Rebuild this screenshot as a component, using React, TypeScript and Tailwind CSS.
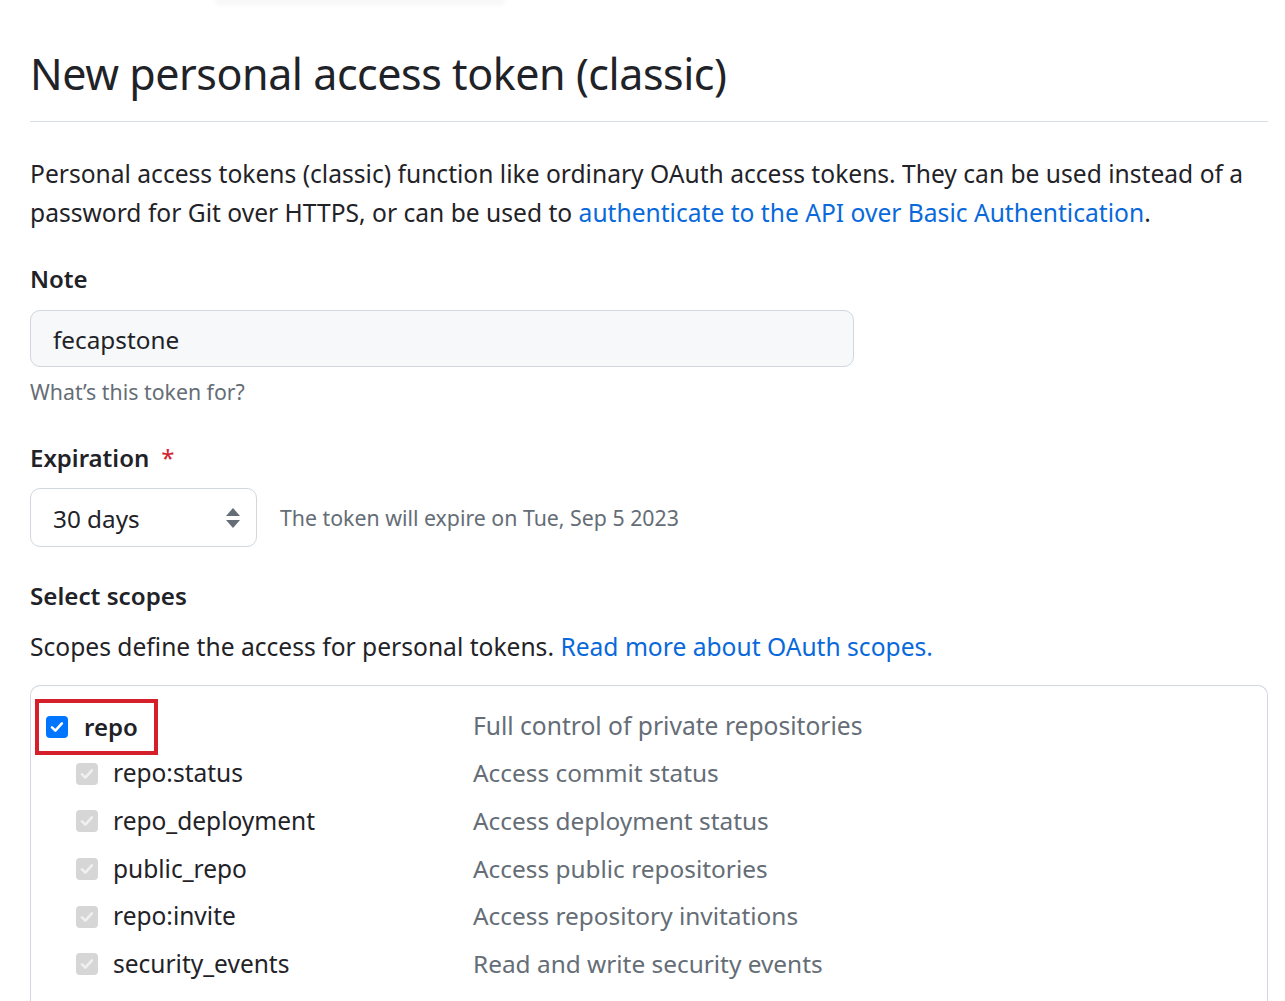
import React from "react";

const font = { fontFamily: '"Noto Sans", "Open Sans", sans-serif' };

function Check({ disabled }: { disabled?: boolean }) {
  return (
    <span
      className={
        "inline-flex h-[22px] w-[22px] shrink-0 items-center justify-center rounded-[4px] " +
        (disabled ? "bg-[#d6d6d6]" : "bg-[#0075ff]")
      }
    >
      <svg width="16" height="16" viewBox="0 0 16 16" fill="none">
        <path
          d="M3 8.4 L6.4 11.6 L12.9 4.4"
          stroke={disabled ? "#f0f0f0" : "#ffffff"}
          strokeWidth="2.6"
          strokeLinecap="round"
          strokeLinejoin="round"
        />
      </svg>
    </span>
  );
}

const subs: [string, string][] = [
  ["repo:status", "Access commit status"],
  ["repo_deployment", "Access deployment status"],
  ["public_repo", "Access public repositories"],
  ["repo:invite", "Access repository invitations"],
  ["security_events", "Read and write security events"],
];

export default function App() {
  return (
    <div className="relative min-h-[1001px] bg-white text-[#1f2328]" style={font}>
      <div className="mx-[215px] h-[4px] w-[290px] rounded-b-full bg-[#f3f3f3] blur-[2px]" />
      <div className="pl-[30px] pr-[17px] pt-[42px]">
        <div className="border-b border-[#d8dee4] pb-[20px]">
          <h1 className="text-[43px] font-normal leading-[55px] tracking-[-0.45px]">
            New personal access token (classic)
          </h1>
        </div>

        <div className="mt-[32px] text-[24.6px] leading-[39px]">
          <div>
            Personal access tokens (classic) function like ordinary OAuth access tokens. They can be used instead of a
          </div>
          <div>
            password for Git over HTTPS, or can be used to{" "}
            <a className="text-[#0969da]">authenticate to the API over Basic Authentication</a>.
          </div>
        </div>

        <div className="mt-[29px] text-[24px] font-semibold leading-[36px]">Note</div>
        <div className="mt-[13px] flex h-[57px] w-[824px] items-center rounded-[10px] border border-[#d0d7de] bg-[#f6f8fa] px-[22px] pt-[3px] text-[24.3px]">
          fecapstone
        </div>
        <div className="mt-[9px] text-[21.3px] leading-[32px] text-[#656d76]">What’s this token for?</div>

        <div className="mt-[32px] flex items-center text-[24px] font-semibold leading-[36px]">
          Expiration
          <span className="ml-[12px] font-normal text-[#d1242f]">*</span>
        </div>
        <div className="mt-[12px] flex items-center">
          <div className="flex h-[59px] w-[227px] items-center justify-between rounded-[10px] border border-[#d0d7de] bg-white pl-[22px] pr-[15px] text-[24.3px]">
            <span className="pt-[4px]">30 days</span>
            <svg width="16" height="22" viewBox="0 0 16 22" fill="#656d76">
              <path d="M8 1 L15 9 L1 9 Z" />
              <path d="M1 13 L15 13 L8 21 Z" />
            </svg>
          </div>
          <span className="ml-[23px] text-[21.3px] text-[#656d76]">The token will expire on Tue, Sep 5 2023</span>
        </div>

        <div className="mt-[31px] text-[24.2px] font-semibold leading-[36px]">Select scopes</div>
        <p className="mt-[15px] text-[24.6px] leading-[36px]">
          Scopes define the access for personal tokens.{" "}
          <a className="text-[#0969da]">Read more about OAuth scopes.</a>
        </p>

        <div className="relative mt-[20px] rounded-t-[10px] border border-b-0 border-[#d0d7de] pb-[60px] pt-[17px]">
          <div className="absolute left-[4px] top-[13px] h-[56px] w-[123px] border-[4px] border-[#d51f2a]" />
          <div className="flex h-[47px] items-center">
            <div className="flex w-[442px] items-center pl-[15px]">
              <Check />
              <span className="ml-[16px] text-[24px] font-semibold">repo</span>
            </div>
            <span className="text-[24.6px] text-[#656d76]">Full control of private repositories</span>
          </div>
          {subs.map(([name, desc]) => (
            <div key={name} className="flex h-[47.6px] items-center">
              <div className="flex w-[442px] items-center pl-[45px]">
                <Check disabled />
                <span className="ml-[15px] text-[24.5px]">{name}</span>
              </div>
              <span className="text-[24.4px] text-[#656d76]">{desc}</span>
            </div>
          ))}
        </div>
      </div>
    </div>
  );
}
